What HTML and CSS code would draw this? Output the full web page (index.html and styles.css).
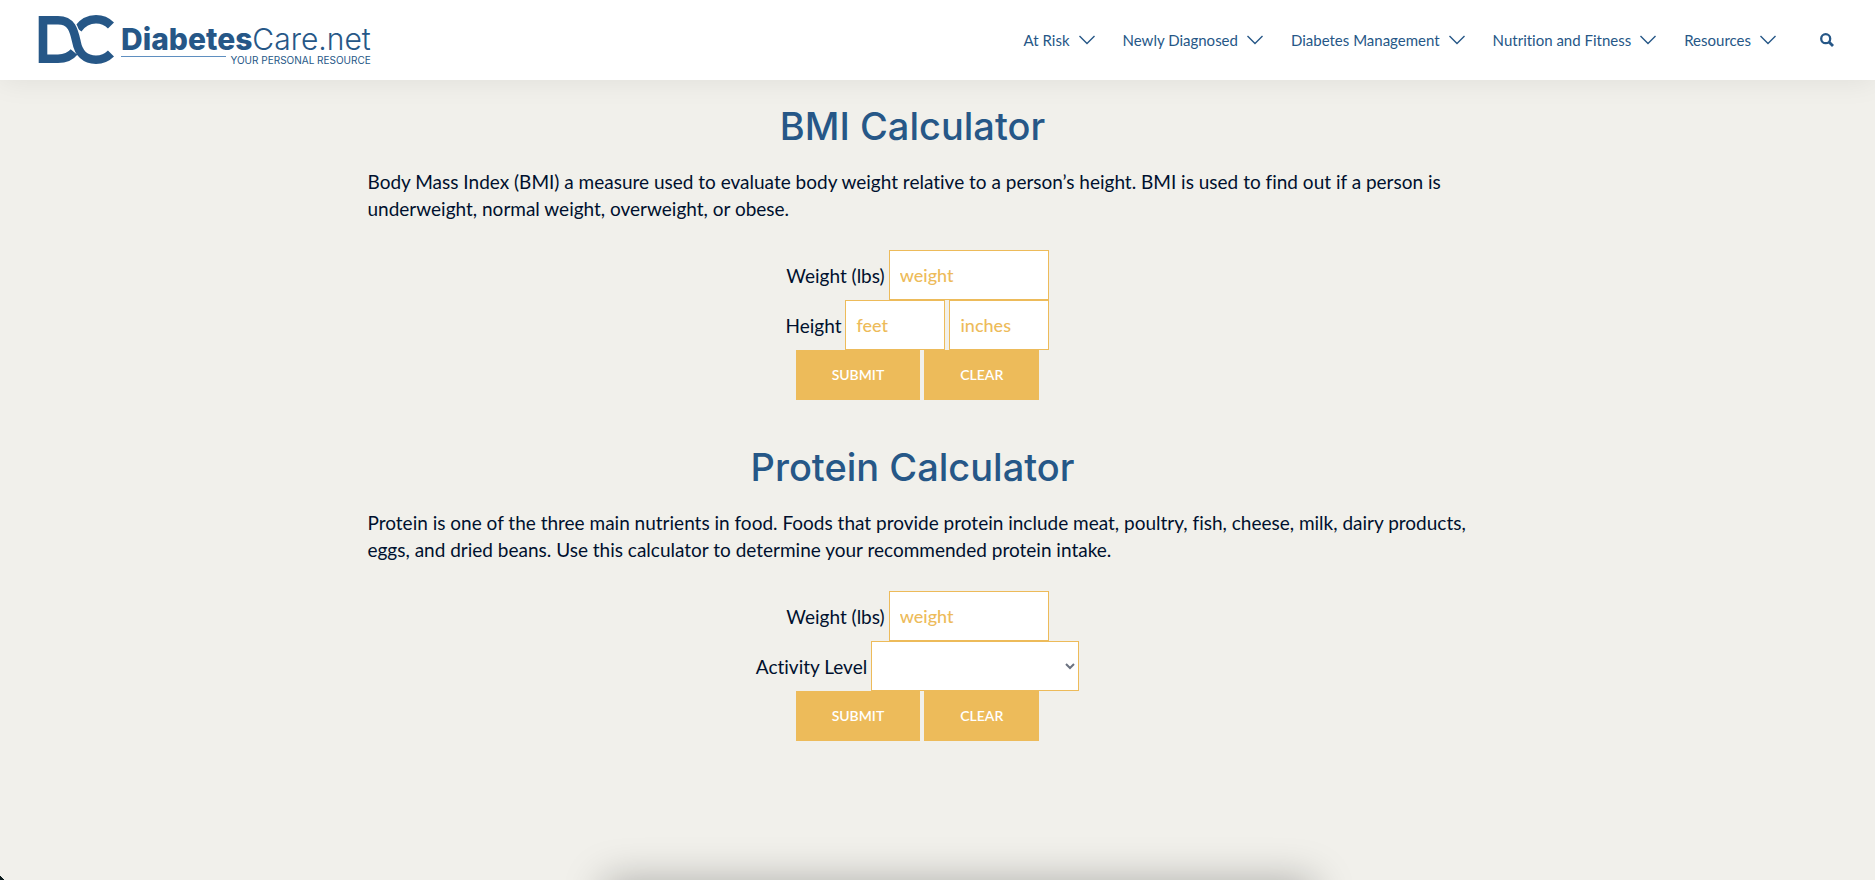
FILE: index.html
```html
<!DOCTYPE html>
<html lang="en">
<head>
    <meta charset="UTF-8">
    <meta name="viewport" content="width=device-width, initial-scale=1.0">
    <title>Calculators - DiabetesCare.net</title>
    <link rel="stylesheet" href="styles.css">
</head>
<body>
    <header class="site-header">
        <a class="logo" href="#" aria-label="DiabetesCare.net home">
            <svg class="logo-mark" width="76" height="50" viewBox="0 0 76 50" fill="none" stroke="#265787" stroke-width="8.6">
                <path d="M40 14C45 7 51 4.300 58 4.300C64 4.300 69 6.500 73 10.500"/>
                <path d="M5 5.300H20C34 5.300 36 16 38.500 27C40.500 38 47 45 58 45C64 45 69 42 73 38" stroke="#fff" stroke-width="11"/>
                <path d="M36 37C32 42 27 43.700 20 43.700H5V5.300H20C34 5.300 36 16 38.500 27C40.500 38 47 44.700 58 44.700C64 44.700 69 42.500 73 38.500"/>
            </svg>
            <span class="logo-text">
                <span class="logo-name"><b>Diabetes</b>Care.net</span>
                <span class="logo-tagline">YOUR PERSONAL RESOURCE</span>
            </span>
        </a>
        <nav class="main-nav">
            <a href="#">At Risk <svg class="chevron" width="16" height="10" viewBox="0 0 16 10"><path d="M.5 1L8 8.500L15.500 1"/></svg></a>
            <a href="#">Newly Diagnosed <svg class="chevron" width="16" height="10" viewBox="0 0 16 10"><path d="M.5 1L8 8.500L15.500 1"/></svg></a>
            <a href="#">Diabetes Management <svg class="chevron" width="16" height="10" viewBox="0 0 16 10"><path d="M.5 1L8 8.500L15.500 1"/></svg></a>
            <a href="#">Nutrition and Fitness <svg class="chevron" width="16" height="10" viewBox="0 0 16 10"><path d="M.5 1L8 8.500L15.500 1"/></svg></a>
            <a href="#">Resources <svg class="chevron" width="16" height="10" viewBox="0 0 16 10"><path d="M.5 1L8 8.500L15.500 1"/></svg></a>
        </nav>
        <button class="search-button" type="button" aria-label="Search">
            <svg width="14" height="14" viewBox="0 0 14 14" fill="none" stroke="#265787"><circle cx="5.700" cy="5.700" r="4.500" stroke-width="2.300"/><path d="M9 9L13 13" stroke-width="2.800"/></svg>
        </button>
    </header>
    <main class="content">
        <section class="calculator">
            <h2>BMI Calculator</h2>
            <p>Body Mass Index (BMI) a measure used to evaluate body weight relative to a person’s height. BMI is used to find out if a person is underweight, normal weight, overweight, or obese.</p>
            <form>
                <div class="form-row">
                    <label for="bmiWeight">Weight (lbs)</label>
                    <input type="text" id="bmiWeight" name="weight" placeholder="weight">
                </div>
                <div class="form-row">
                    <label for="feet">Height</label>
                    <input class="short" type="text" id="feet" name="feet" placeholder="feet">
                    <input class="short" type="text" id="inches" name="inches" placeholder="inches" aria-label="Height inches">
                </div>
                <div class="form-row">
                    <button type="submit">SUBMIT</button>
                    <button type="reset">CLEAR</button>
                </div>
            </form>
        </section>
        <section class="calculator">
            <h2>Protein Calculator</h2>
            <p>Protein is one of the three main nutrients in food. Foods that provide protein include meat, poultry, fish, cheese, milk, dairy products, eggs, and dried beans. Use this calculator to determine your recommended protein intake.</p>
            <form>
                <div class="form-row">
                    <label for="proteinWeight">Weight (lbs)</label>
                    <input type="text" id="proteinWeight" name="weight" placeholder="weight">
                </div>
                <div class="form-row">
                    <label for="activity">Activity Level</label>
                    <span class="select-wrap">
                        <select id="activity" name="activity"><option value=""></option></select>
                        <svg width="10" height="7" viewBox="0 0 10 7"><path d="M1 1L5 5L9 1"/></svg>
                    </span>
                </div>
                <div class="form-row">
                    <button type="submit">SUBMIT</button>
                    <button type="reset">CLEAR</button>
                </div>
            </form>
        </section>
    </main>
    <div class="bottom-panel"></div>
    <div class="corner"></div>
</body>
</html>
```
FILE: styles.css
```css
* { box-sizing: border-box; }
body { margin: 0; min-height: 100vh; background: #f1f0eb; color: #00102e; font: 400 19px/27px Lato, sans-serif; font-variant-ligatures: none; }

.site-header { display: flex; align-items: center; height: 80px; padding: 0 41px 0 38px; background: #fff; box-shadow: 0 0 30px rgba(0, 0, 0, 0.08); }
.logo { display: flex; gap: 7px; color: #265787; text-decoration: none; }
.logo-mark { display: block; }
.logo-text { display: flex; flex-direction: column; padding-top: 8px; }
.logo-name { font: 300 30px/32px Inter, sans-serif; }
.logo-name b { font-weight: 800; }
.logo-tagline { display: flex; gap: 5px; font: 400 10px/10px Inter, sans-serif; }
.logo-tagline::before { content: ""; flex: 1; height: 1px; margin-top: 1px; background: #5f8fc0; }
.main-nav { display: flex; gap: 28px; margin-left: auto; }
.main-nav a { display: flex; align-items: center; gap: 9px; color: #265787; font-size: 15px; line-height: 20px; text-decoration: none; }
.chevron { fill: none; stroke: #265787; stroke-width: 1.4; }
.search-button { display: flex; margin-left: 44px; padding: 0; border: 0; background: none; cursor: pointer; }

.content { max-width: 1140px; margin: 0 auto; padding: 22px 40px 0 0; }
.calculator { margin-bottom: 43px; }
.calculator h2 { margin: 0; padding-right: 10px; color: #265787; font: 500 38px/48px Inter, sans-serif; text-align: center; }
.calculator p { margin: 18px 0 28px; }
.form-row { display: flex; justify-content: center; align-items: center; gap: 4px; }
.form-row input { width: 160px; height: 50px; padding: 0 10px; border: 1px solid #edbb5a; border-radius: 0; background: #fff; color: #edbb5a; font: 500 18px/27px Lato, sans-serif; }
.form-row input.short { width: 100px; }
.form-row input::placeholder { color: #edbb5a; opacity: 1; }
.form-row button { height: 50px; padding: 0 36px; border: 0; background: #edbb5a; color: #fff; font: 600 14px/20px Lato, sans-serif; cursor: pointer; }
.select-wrap { position: relative; display: flex; }
.select-wrap select { width: 208px; height: 50px; padding: 0 10px; border: 1px solid #edbb5a; border-radius: 0; background: #fff; color: #00102e; font: inherit; appearance: none; }
.select-wrap svg { position: absolute; top: 22px; right: 4px; fill: none; stroke: #6b7280; stroke-width: 2; pointer-events: none; }

/* panel waiting below the window edge, only its shadow shows */
.bottom-panel { position: fixed; top: 100%; left: 50%; width: 710px; height: 100px; margin-left: -334px; box-shadow: 0 0 40px rgba(0, 0, 0, 0.28); }
.corner { position: fixed; left: 0; bottom: 0; width: 4px; height: 4px; background: linear-gradient(45deg, #0b1a1c 50%, transparent 50%); }
```
